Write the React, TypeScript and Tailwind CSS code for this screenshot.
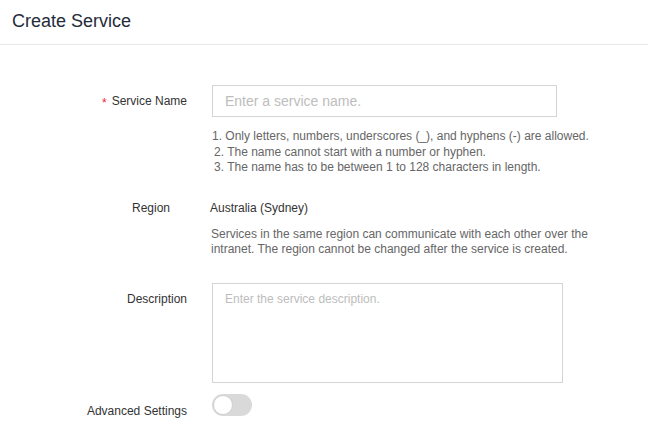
import React from 'react';

const App = () => {
    return (
        <div className="w-[648px] h-[443px] overflow-hidden bg-white font-['Liberation_Sans',Arial,sans-serif] text-[#333]">
            {/* Header */}
            <div className="h-[45px] border-b border-[#e8e8e8] px-3 pt-[9px]">
                <h1 className="text-[18px] leading-[24px] text-[#252b3a]">Create Service</h1>
            </div>

            <div className="pt-[40px] text-[12px]">
                {/* Service Name */}
                <div className="grid grid-cols-[187px_1fr] gap-x-[25px]">
                    <label className="flex items-center justify-end leading-[32px] h-[32px]">
                        <span className="inline-block translate-y-[2px] text-[#f5222d] mr-[5px] text-[12px] leading-none">*</span>
                        Service Name
                    </label>
                    <div>
                        <input
                            className="w-[345px] h-[32px] border border-[#d4d4d4] px-3 text-[14px] outline-none placeholder:text-[#bdbdbd]"
                            placeholder="Enter a service name."
                        />
                        <div className="mt-[12px] leading-[15.5px] text-[#666]">
                            <p>1. Only letters, numbers, underscores (_), and hyphens (-) are allowed.</p>
                            <p className="pl-[2px]">2. The name cannot start with a number or hyphen.</p>
                            <p className="pl-[2px]">3. The name has to be between 1 to 128 characters in length.</p>
                        </div>
                    </div>
                </div>

                {/* Region */}
                <div className="grid grid-cols-[187px_1fr] gap-x-[23px] mt-[24px]">
                    <div className="text-right pr-[17px] leading-[16px]">Region</div>
                    <div>
                        <p className="leading-[16px]">Australia (Sydney)</p>
                        <p className="mt-[11px] ml-[1px] leading-[15px] text-[#666]">
                            Services in the same region can communicate with each other over the
                            <br />
                            intranet. The region cannot be changed after the service is created.
                        </p>
                    </div>
                </div>

                {/* Description */}
                <div className="grid grid-cols-[187px_1fr] gap-x-[25px] mt-[26px]">
                    <label className="text-right pt-[8px] leading-[16px]">Description</label>
                    <textarea
                        className="w-[351px] h-[100px] border border-[#d4d4d4] px-3 pt-[7px] leading-[16px] text-[12px] resize-none outline-none placeholder:text-[#bdbdbd]"
                        placeholder="Enter the service description."
                    />
                </div>

                {/* Advanced Settings */}
                <div className="grid grid-cols-[187px_1fr] gap-x-[25px] mt-[11px]">
                    <label className="text-right pt-[9px] leading-[16px]">Advanced Settings</label>
                    <div>
                        <div className="w-[40px] h-[22px] rounded-full bg-[#d9d9d9] p-[1px]">
                            <div className="w-[20px] h-[20px] rounded-full bg-white border border-[#d0d0d0]" />
                        </div>
                    </div>
                </div>
            </div>
        </div>
    );
};

export default App;
